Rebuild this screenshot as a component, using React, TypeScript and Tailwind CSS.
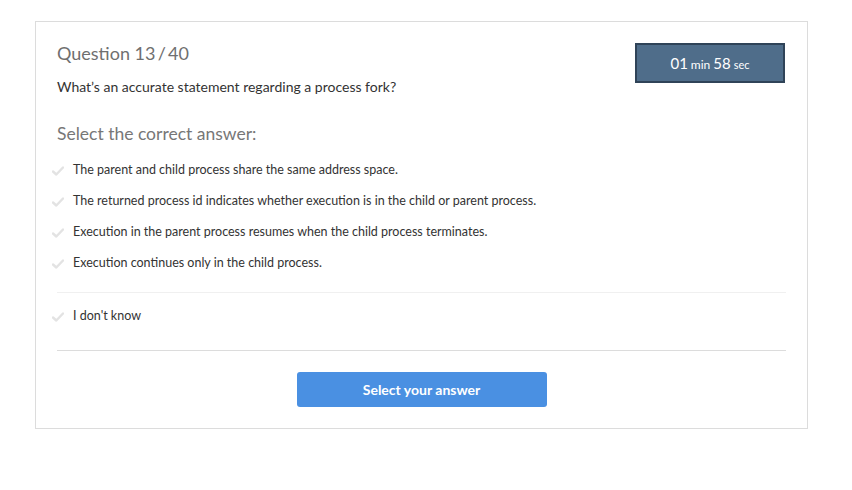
export default function App() {
  const answers = [
    "The parent and child process share the same address space.",
    "The returned process id indicates whether execution is in the child or parent process.",
    "Execution in the parent process resumes when the child process terminates.",
    "Execution continues only in the child process.",
  ]

  const Check = () => (
    <svg width="12" height="10" viewBox="0 0 12 10" className="shrink-0">
      <path d="M1 5.5 L4.3 8.5 L11 1.5" fill="none" stroke="#e3e3e3" strokeWidth="2.4" strokeLinecap="round" strokeLinejoin="round" />
    </svg>
  )

  return (
    <div className="min-h-screen bg-white pt-[21px] pl-[35px]" style={{ fontFamily: "Lato, 'Open Sans', sans-serif" }}>
      <div className="w-[773px] h-[408px] border border-[#dcdcdc] px-[21px] pt-[18px]">
        <div className="flex justify-between">
          <div>
            <h1 className="text-[18px] text-[#6f6f6f] leading-[24px] mt-[1px]">Question 13{"\u2009/\u2009"}40</h1>
            <p className="text-[14px] text-[#333] mt-[13px] leading-[18px]">
              What’s an accurate statement regarding a process fork?
            </p>
          </div>
          <div className="w-[150px] h-[40px] mt-[3px] mr-[1px] bg-[#4f6d8a] border-2 border-[#2f4358] flex items-center justify-center text-white">
            <div className="flex items-baseline">
              <span className="text-[15px]">01</span>
              <span className="text-[12px] ml-[3px]">min</span>
              <span className="text-[15px] ml-[3px]">58</span>
              <span className="text-[11px] ml-[3px]">sec</span>
            </div>
          </div>
        </div>

        <h2 className="text-[17.5px] text-[#777] mt-[26px] leading-[24px]">Select the correct answer:</h2>

        <div className="mt-[9px]">
          {answers.map((a) => (
            <div key={a} className="flex items-center h-[31px]">
              <div className="-ml-[5px] w-[21px]"><Check /></div>
              <span className="text-[12.5px] text-[#333]">{a}</span>
            </div>
          ))}
        </div>

        <div className="border-t border-[#f0f0f0] mt-[13px]" />

        <div className="flex items-center h-[31px] mt-[8px]">
          <div className="-ml-[5px] w-[21px]"><Check /></div>
          <span className="text-[12.5px] text-[#333]">I don't know</span>
        </div>

        <div className="border-t border-[#dcdcdc] mt-[18px]" />

        <div className="flex justify-center mt-[21px]">
          <button className="w-[250px] h-[35px] bg-[#4a90e2] text-white font-bold text-[14px] rounded-[3px]">
            Select your answer
          </button>
        </div>
      </div>
    </div>
  )
}
